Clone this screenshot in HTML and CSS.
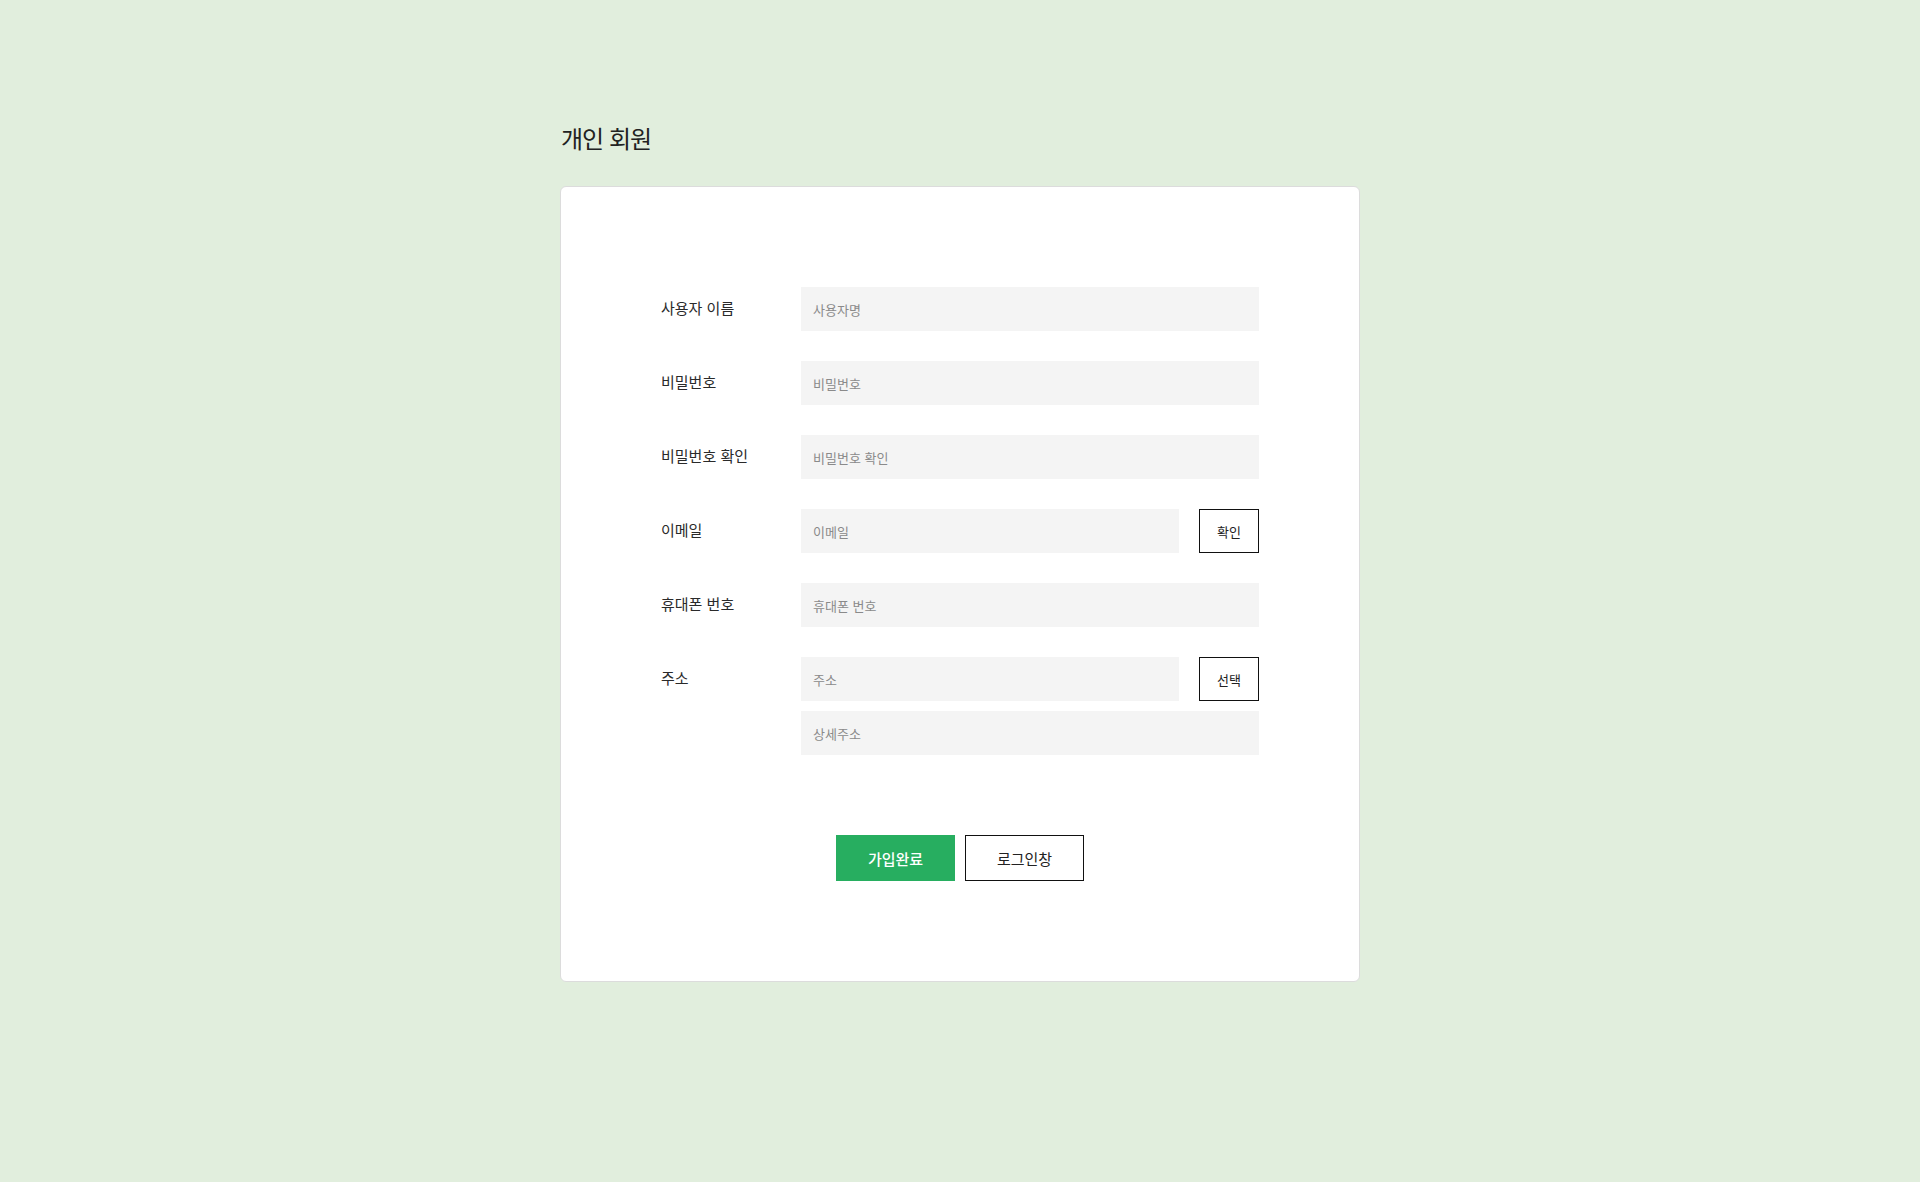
FILE: index.html
```html
<!DOCTYPE html>
<html lang="ko">
<head>
<meta charset="utf-8">
<title>개인 회원</title>
<link rel="stylesheet" href="styles.css">
</head>
<body>
<div class="wrap">
  <h1 class="title">개인 회원</h1>
  <div class="card">
    <form class="form">
      <div class="row">
        <label class="label">사용자 이름</label>
        <div class="field"><input class="input" type="text" placeholder="사용자명"></div>
      </div>
      <div class="row">
        <label class="label">비밀번호</label>
        <div class="field"><input class="input" type="password" placeholder="비밀번호"></div>
      </div>
      <div class="row">
        <label class="label">비밀번호 확인</label>
        <div class="field"><input class="input" type="password" placeholder="비밀번호 확인"></div>
      </div>
      <div class="row">
        <label class="label">이메일</label>
        <div class="field split"><input class="input short" type="text" placeholder="이메일"><button type="button" class="small-btn">확인</button></div>
      </div>
      <div class="row">
        <label class="label">휴대폰 번호</label>
        <div class="field"><input class="input" type="text" placeholder="휴대폰 번호"></div>
      </div>
      <div class="row top">
        <label class="label">주소</label>
        <div class="field stack">
          <div class="split"><input class="input short" type="text" placeholder="주소"><button type="button" class="small-btn">선택</button></div>
          <input class="input" type="text" placeholder="상세주소">
        </div>
      </div>
    </form>
    <div class="actions">
      <button type="button" class="btn primary">가입완료</button>
      <button type="button" class="btn outline">로그인창</button>
    </div>
  </div>
</div>
</body>
</html>
```

FILE: styles.css
```css
* { box-sizing: border-box; }
html, body { margin: 0; padding: 0; }
body {
  background: #e1eedd;
  font-family: "Noto Sans CJK KR", "Noto Sans", sans-serif;
  color: #222;
  min-height: 1182px;
}
.wrap {
  width: 800px;
  margin: 0 auto;
  padding-top: 120px;
}
.title {
  margin: 0 0 30px 1px;
  font-size: 24px;
  font-weight: 400;
  line-height: 36px;
  color: #222;
  letter-spacing: -1px;
}
.card {
  background: #fff;
  border: 1px solid #dcdcdc;
  border-radius: 6px;
  height: 796px;
  padding: 100px 100px 0;
}
.form {
  display: flex;
  flex-direction: column;
  gap: 30px;
}
.row {
  display: flex;
  align-items: center;
}
.row.top { align-items: flex-start; }
.row.top .label { line-height: 42px; }
.label {
  width: 140px;
  font-size: 15px;
  font-weight: 400;
  line-height: 20px;
  padding-bottom: 2px;
  color: #2a2a2a;
}
.field { width: 458px; }
.split {
  display: flex;
  justify-content: space-between;
}
.stack {
  display: flex;
  flex-direction: column;
  gap: 10px;
}
.input {
  display: block;
  width: 100%;
  height: 44px;
  border: 0;
  background: #f4f4f4;
  padding: 0 12px;
  font-family: inherit;
  font-size: 13px;
  color: #333;
  outline: none;
}
.input::placeholder { color: #8a8a8a; }
.input.short { width: 378px; }
.small-btn {
  width: 60px;
  height: 44px;
  border: 1px solid #111;
  background: #fff;
  font-family: inherit;
  font-size: 13px;
  color: #222;
  padding: 0;
}
.actions {
  display: flex;
  justify-content: center;
  gap: 10px;
  margin-top: 80px;
}
.btn {
  width: 119px;
  height: 46px;
  font-family: inherit;
  font-size: 15px;
  padding: 0;
}
.btn.primary {
  background: #27ae60;
  border: 0;
  color: #fff;
  font-weight: 500;
}
.btn.outline {
  background: #fff;
  border: 1px solid #111;
  color: #222;
}
```
